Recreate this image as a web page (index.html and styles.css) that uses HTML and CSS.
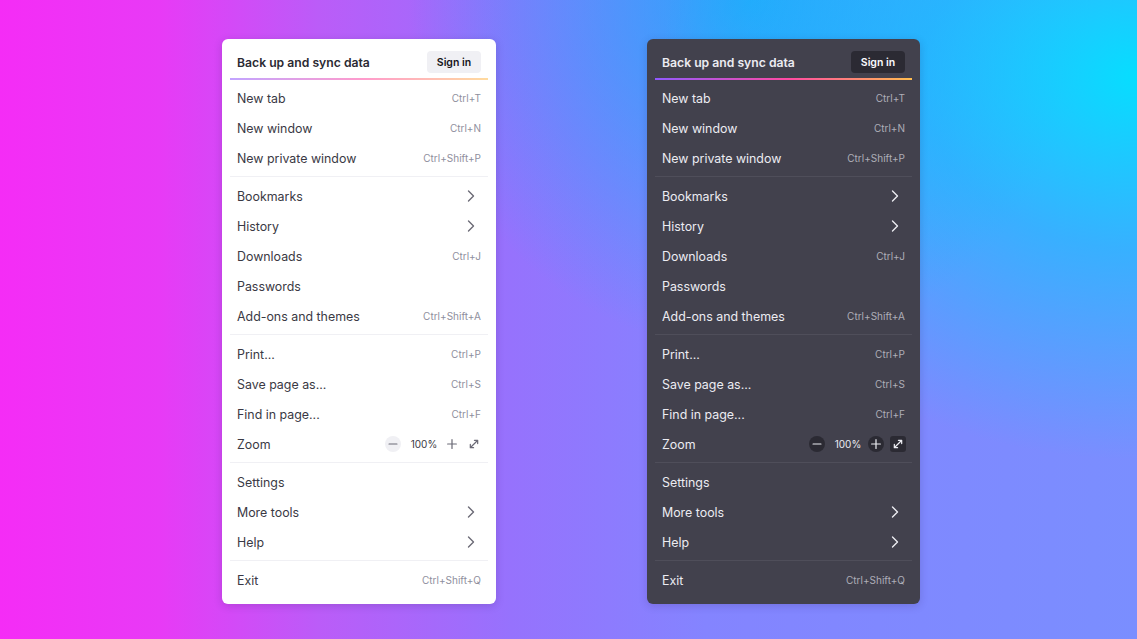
FILE: index.html
```html
<!DOCTYPE html>
<html lang="en">
<head>
    <meta charset="UTF-8">
    <meta name="viewport" content="width=device-width, initial-scale=1.0">
    <title>App menu</title>
    <link rel="stylesheet" href="styles.css">
</head>
<body>
    <main class="stage">

        <!-- Light menu -->
        <section class="menu light">
            <div class="menu-header">
                <span class="menu-title">Back up and sync data</span>
                <button class="sign-in">Sign in</button>
            </div>
            <div class="sync-line"></div>

            <div class="item"><span>New tab</span><span class="key">Ctrl+T</span></div>
            <div class="item"><span>New window</span><span class="key">Ctrl+N</span></div>
            <div class="item"><span>New private window</span><span class="key">Ctrl+Shift+P</span></div>
            <hr class="sep">
            <div class="item"><span>Bookmarks</span><svg class="chev" viewBox="0 0 8 12"><path d="M1.5 1l5 5-5 5"/></svg></div>
            <div class="item"><span>History</span><svg class="chev" viewBox="0 0 8 12"><path d="M1.5 1l5 5-5 5"/></svg></div>
            <div class="item"><span>Downloads</span><span class="key">Ctrl+J</span></div>
            <div class="item"><span>Passwords</span></div>
            <div class="item"><span>Add-ons and themes</span><span class="key">Ctrl+Shift+A</span></div>
            <hr class="sep">
            <div class="item"><span>Print...</span><span class="key">Ctrl+P</span></div>
            <div class="item"><span>Save page as...</span><span class="key">Ctrl+S</span></div>
            <div class="item"><span>Find in page...</span><span class="key">Ctrl+F</span></div>
            <div class="item">
                <span>Zoom</span>
                <div class="zoom">
                    <span class="zbtn round"><svg viewBox="0 0 16 16"><path d="M3.5 8h9"/></svg></span>
                    <span class="zval">100%</span>
                    <span class="zbtn"><svg viewBox="0 0 16 16"><path d="M8 3v10M3 8h10"/></svg></span>
                    <span class="zbtn square"><svg viewBox="0 0 16 16"><path d="M4 12l8-8M8.5 3.8h3.7v3.7M3.8 8.5v3.7h3.7"/></svg></span>
                </div>
            </div>
            <hr class="sep">
            <div class="item"><span>Settings</span></div>
            <div class="item"><span>More tools</span><svg class="chev" viewBox="0 0 8 12"><path d="M1.5 1l5 5-5 5"/></svg></div>
            <div class="item"><span>Help</span><svg class="chev" viewBox="0 0 8 12"><path d="M1.5 1l5 5-5 5"/></svg></div>
            <hr class="sep">
            <div class="item"><span>Exit</span><span class="key">Ctrl+Shift+Q</span></div>
        </section>

        <!-- Dark menu -->
        <section class="menu dark">
            <div class="menu-header">
                <span class="menu-title">Back up and sync data</span>
                <button class="sign-in">Sign in</button>
            </div>
            <div class="sync-line"></div>

            <div class="item"><span>New tab</span><span class="key">Ctrl+T</span></div>
            <div class="item"><span>New window</span><span class="key">Ctrl+N</span></div>
            <div class="item"><span>New private window</span><span class="key">Ctrl+Shift+P</span></div>
            <hr class="sep">
            <div class="item"><span>Bookmarks</span><svg class="chev" viewBox="0 0 8 12"><path d="M1.5 1l5 5-5 5"/></svg></div>
            <div class="item"><span>History</span><svg class="chev" viewBox="0 0 8 12"><path d="M1.5 1l5 5-5 5"/></svg></div>
            <div class="item"><span>Downloads</span><span class="key">Ctrl+J</span></div>
            <div class="item"><span>Passwords</span></div>
            <div class="item"><span>Add-ons and themes</span><span class="key">Ctrl+Shift+A</span></div>
            <hr class="sep">
            <div class="item"><span>Print...</span><span class="key">Ctrl+P</span></div>
            <div class="item"><span>Save page as...</span><span class="key">Ctrl+S</span></div>
            <div class="item"><span>Find in page...</span><span class="key">Ctrl+F</span></div>
            <div class="item">
                <span>Zoom</span>
                <div class="zoom">
                    <span class="zbtn round"><svg viewBox="0 0 16 16"><path d="M3.5 8h9"/></svg></span>
                    <span class="zval">100%</span>
                    <span class="zbtn round"><svg viewBox="0 0 16 16"><path d="M8 3v10M3 8h10"/></svg></span>
                    <span class="zbtn square"><svg viewBox="0 0 16 16"><path d="M4 12l8-8M8.5 3.8h3.7v3.7M3.8 8.5v3.7h3.7"/></svg></span>
                </div>
            </div>
            <hr class="sep">
            <div class="item"><span>Settings</span></div>
            <div class="item"><span>More tools</span><svg class="chev" viewBox="0 0 8 12"><path d="M1.5 1l5 5-5 5"/></svg></div>
            <div class="item"><span>Help</span><svg class="chev" viewBox="0 0 8 12"><path d="M1.5 1l5 5-5 5"/></svg></div>
            <hr class="sep">
            <div class="item"><span>Exit</span><span class="key">Ctrl+Shift+Q</span></div>
        </section>

    </main>
</body>
</html>
```

FILE: styles.css
```css
/* Basis */
html, body {
    margin: 0;
    padding: 0;
    height: 100%;
}

body {
    font-family: Inter, "Noto Sans", sans-serif;
    background:
        radial-gradient(ellipse 42% 60% at 100% 12%, rgba(0, 226, 255, 0.95) 0%, rgba(0, 205, 255, 0.55) 45%, rgba(0, 190, 255, 0) 100%),
        radial-gradient(ellipse 30% 55% at 66% 0%, rgba(10, 176, 250, 0.75) 0%, rgba(10, 176, 250, 0) 100%),
        linear-gradient(90deg, #f52cf6 0%, #e83af6 14%, #bb5cf8 28%, #9672fd 45%, #8484ff 62%, #7a8eff 100%);
    overflow: hidden;
}

.stage {
    display: flex;
    justify-content: center;
    align-items: flex-start;
    gap: 151px;
    padding: 39px 0 0 5px;
}

/* Menu panel */
.menu {
    width: 274px;
    box-sizing: border-box;
    padding: 8px 8px 9px;
    border-radius: 6px;
    font-size: 12.4px;
    box-shadow: 0 2px 8px rgba(40, 20, 80, 0.18);
}

.menu.light {
    background: #fff;
    color: #3a3944;
}

.menu.dark {
    width: 273px;
    background: #42414d;
    color: #ececf2;
}

.menu-header {
    height: 30px;
    display: flex;
    align-items: center;
    justify-content: space-between;
    padding: 0 7px;
}

.menu-title {
    font-weight: 600;
    font-size: 12.2px;
}

.light .menu-title {
    color: #2b2a33;
}

.sign-in {
    font-family: inherit;
    font-size: 10.5px;
    font-weight: 600;
    height: 22px;
    width: 54px;
    border: none;
    border-radius: 4px;
    padding: 0;
}

.light .sign-in {
    background: #f0f0f4;
    color: #15141a;
}

.dark .sign-in {
    background: #2b2a33;
    color: #fbfbfe;
}

.sync-line {
    height: 2px;
    margin: 1px 0 3px;
    background: linear-gradient(90deg, #9059ff 0%, #ff4aa2 52%, #ffbd4f 100%);
}

.light .sync-line {
    opacity: 0.55;
}

/* Items */
.item {
    height: 30px;
    display: flex;
    align-items: center;
    justify-content: space-between;
    padding: 0 7px;
}

.key {
    font-size: 10px;
}

.light .key {
    color: #8f8f9d;
}

.dark .key {
    color: #aeaeb8;
}

.chev {
    width: 8px;
    height: 12px;
    margin-right: 6px;
    fill: none;
    stroke: currentColor;
    stroke-width: 1.4;
    stroke-linecap: round;
    stroke-linejoin: round;
}

.light .chev {
    color: #6b6a76;
}

.sep {
    border: none;
    height: 1px;
    margin: 3px 0 4px;
}

.light .sep {
    background: #f0f0f4;
}

.dark .sep {
    background: #4f4e5a;
}

/* Zoom controls */
.zoom {
    display: flex;
    align-items: center;
    gap: 3px;
    margin-right: -1px;
}

.zbtn {
    width: 16px;
    height: 16px;
    display: flex;
    align-items: center;
    justify-content: center;
}

.zbtn svg {
    width: 14px;
    height: 14px;
    fill: none;
    stroke: currentColor;
    stroke-width: 1.4;
    stroke-linecap: round;
    stroke-linejoin: round;
}

.zbtn.round {
    border-radius: 50%;
}

.zbtn.square {
    border-radius: 3px;
    margin-left: 3px;
}

.light .zbtn {
    color: #6b6a76;
}

.light .zbtn.round {
    background: #f0f0f4;
}

.dark .zbtn.round,
.dark .zbtn.square {
    background: #2b2a33;
}

.zval {
    font-size: 10px;
    width: 30px;
    margin: 0 2px 0 5px;
    text-align: center;
}
```
